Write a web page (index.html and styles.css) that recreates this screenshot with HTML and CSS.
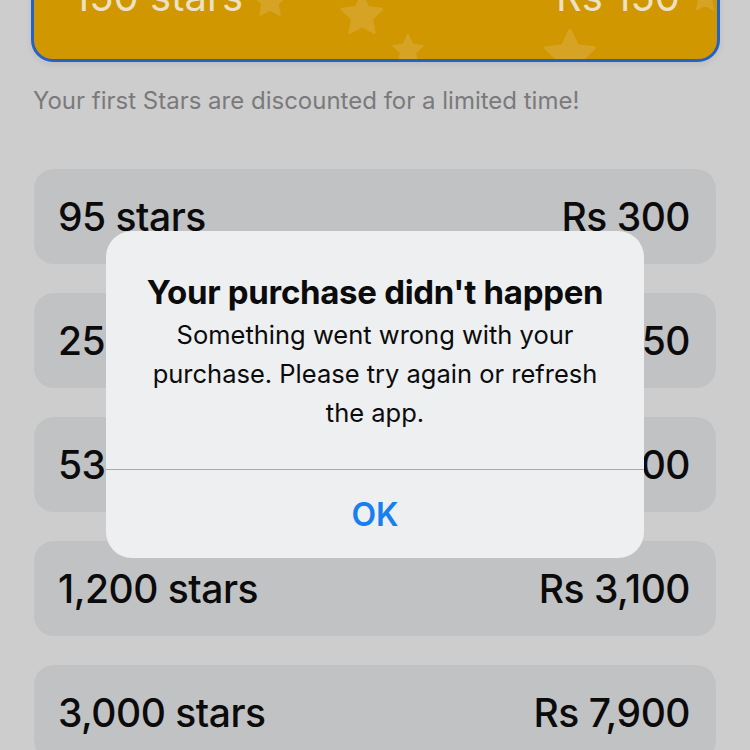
FILE: index.html
```html
<!DOCTYPE html>
<html lang="en">
<head>
<meta charset="utf-8">
<title>Stars</title>
<link rel="stylesheet" href="styles.css">
</head>
<body>
<main class="page">
  <div class="promo">
    <span class="promo-label">150 stars</span>
    <span class="promo-price">Rs 150</span>
    <svg class="deco deco-1" viewBox="0 0 24 24"><path d="M12 1.5l3.1 6.6 7.2.9-5.3 5 1.4 7.1L12 17.6l-6.4 3.5 1.4-7.1-5.3-5 7.2-.9z"/></svg>
    <svg class="deco deco-2" viewBox="0 0 24 24"><path d="M12 1.5l3.1 6.6 7.2.9-5.3 5 1.4 7.1L12 17.6l-6.4 3.5 1.4-7.1-5.3-5 7.2-.9z"/></svg>
    <svg class="deco deco-3" viewBox="0 0 24 24"><path d="M12 1.5l3.1 6.6 7.2.9-5.3 5 1.4 7.1L12 17.6l-6.4 3.5 1.4-7.1-5.3-5 7.2-.9z"/></svg>
    <svg class="deco deco-4" viewBox="0 0 24 24"><path d="M12 1.5l3.1 6.6 7.2.9-5.3 5 1.4 7.1L12 17.6l-6.4 3.5 1.4-7.1-5.3-5 7.2-.9z"/></svg>
    <svg class="deco deco-5" viewBox="0 0 24 24"><path d="M12 1.5l3.1 6.6 7.2.9-5.3 5 1.4 7.1L12 17.6l-6.4 3.5 1.4-7.1-5.3-5 7.2-.9z"/></svg>
  </div>
  <p class="note">Your first Stars are discounted for a limited time!</p>
  <ul class="options">
    <li class="option"><span>95 stars</span><span>Rs 300</span></li>
    <li class="option"><span>250 stars</span><span>Rs 650</span></li>
    <li class="option"><span>530 stars</span><span>Rs 1,400</span></li>
    <li class="option"><span>1,200 stars</span><span>Rs 3,100</span></li>
    <li class="option"><span>3,000 stars</span><span>Rs 7,900</span></li>
  </ul>
</main>
<div class="alert" role="alertdialog">
  <div class="alert-body">
    <h2 class="alert-title">Your purchase didn't happen</h2>
    <p class="alert-text">Something went wrong with your purchase. Please try again or refresh the app.</p>
  </div>
  <button class="alert-btn" type="button">OK</button>
</div>
</body>
</html>
```
FILE: styles.css
```css
html, body {
  margin: 0;
  padding: 0;
  background: #cdcdcd;
  overflow: hidden;
  height: 750px;
}
body {
  font-family: Inter, "Noto Sans", sans-serif;
  color: #0b0b0c;
}
.page {
  margin-top: -70px;
  padding: 0 34px;
}
.promo {
  position: relative;
  overflow: hidden;
  height: 126px;
  margin: 0 -4px 0 -3px;
  padding: 0 37px 0 39px;
  border: 3px solid #2463c6;
  border-radius: 22px;
  background: #d09700;
  display: flex;
  align-items: center;
  justify-content: space-between;
  font-size: 40px;
  color: #ece1c6;
  box-shadow: 0 2px 6px rgba(0,0,0,0.08);
}
.promo-label, .promo-price { position: relative; z-index: 1; }
.deco {
  position: absolute;
  fill: #dcb04a;
  opacity: 0.5;
  stroke: #dcb04a;
  stroke-width: 1.5;
  stroke-linejoin: round;
}
.deco-1 { left: 218px; top: 50px; width: 36px; height: 36px; }
.deco-2 { left: 305px; top: 59px; width: 46px; height: 46px; }
.deco-3 { left: 357px; top: 100px; width: 34px; height: 34px; }
.deco-4 { left: 508px; top: 94px; width: 56px; height: 56px; }
.deco-5 { left: 656px; top: 50px; width: 30px; height: 30px; }
.note {
  margin: 25px 0 0 -1px;
  font-size: 24px;
  line-height: 28px;
  color: #7a7a7c;
}
.options {
  list-style: none;
  margin: 54px 0 0;
  padding: 0;
  display: flex;
  flex-direction: column;
  gap: 29px;
}
.option {
  height: 95px;
  border-radius: 20px;
  background: #c1c2c4;
  display: flex;
  align-items: center;
  justify-content: space-between;
  padding: 0 26px 0 24px;
  font-size: 39px;
  font-weight: 500;
  letter-spacing: -0.5px;
}
.alert {
  position: absolute;
  left: 106px;
  top: 231px;
  width: 538px;
  height: 327px;
  border-radius: 26px;
  background: #eeeff1;
  display: flex;
  flex-direction: column;
  overflow: hidden;
}
.alert-body {
  padding: 42px 0 0;
  height: 239px;
  box-sizing: border-box;
  border-bottom: 1px solid #a9a9ab;
  text-align: center;
}
.alert-title {
  margin: 0;
  padding: 0 10px;
  font-size: 33px;
  line-height: 38px;
  font-weight: 700;
  letter-spacing: -0.3px;
}
.alert-text {
  margin: 4px 0 0;
  padding: 0 40px;
  font-size: 25.5px;
  line-height: 39px;
  font-weight: 400;
}
.alert-btn {
  flex: 1;
  border: 0;
  background: transparent;
  font-family: inherit;
  font-size: 32px;
  font-weight: 600;
  color: #177ff0;
  padding: 0;
}
```
